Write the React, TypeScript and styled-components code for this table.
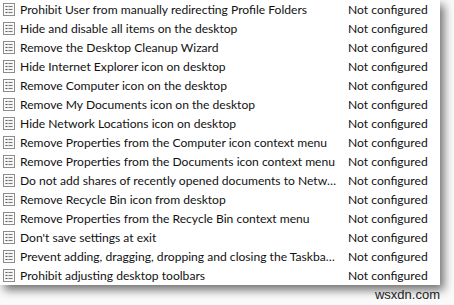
import styled, { createGlobalStyle } from "styled-components";

const GlobalStyle = createGlobalStyle`
  html, body {
    margin: 0;
    padding: 0;
    background: #fafafa;
  }
  body {
    width: 454px;
    height: 305px;
    overflow: hidden;
  }
`;

const Page = styled.div`
  width: 454px;
  height: 305px;
  display: flex;
  flex-direction: column;
  font-family: Lato, "Open Sans", sans-serif;
`;

const Panel = styled.div`
  width: 440px;
  height: 285px;
  background: #fff;
  box-shadow: 4px 5px 9px rgba(0, 0, 0, 0.55);
  display: flex;
  flex-direction: column;
`;

const Row = styled.div`
  height: 19px;
  display: flex;
  align-items: center;
  font-size: 12.1px;
  color: #111;
  white-space: nowrap;
`;

const NameCell = styled.div`
  width: 343px;
  flex: none;
  display: flex;
  align-items: center;
  gap: 5px;
  padding-left: 3px;
  box-sizing: border-box;
`;

const NameText = styled.span`
  flex: 1;
  min-width: 0;
  overflow: hidden;
  text-overflow: ellipsis;
  padding-right: 4px;
`;

const State = styled.span`
  padding-left: 5px;
`;

const Watermark = styled.div`
  align-self: flex-end;
  margin-right: 14px;
  margin-top: 2px;
  font-family: "Liberation Sans", Arial, sans-serif;
  font-size: 13px;
  color: #222;
`;

function PolicyIcon() {
  return (
    <svg width="12" height="13" viewBox="0 0 12 13" style={{ flex: "none" }}>
      <rect x="0.5" y="0.5" width="11" height="12" fill="#fdfdfd" stroke="#8c8c8c" />
      <rect x="2" y="2" width="8" height="9" fill="#f2f2f2" />
      <rect x="2.5" y="3" width="2" height="1" fill="#5a5a5a" />
      <rect x="2.5" y="6" width="2" height="1" fill="#5a5a5a" />
      <rect x="2.5" y="9" width="2" height="1" fill="#5a5a5a" />
      <rect x="5.5" y="3" width="4" height="1" fill="#7a7a7a" />
      <rect x="5.5" y="6" width="4" height="1" fill="#7a7a7a" />
      <rect x="5.5" y="9" width="4" height="1" fill="#7a7a7a" />
    </svg>
  );
}

const policies = [
  "Prohibit User from manually redirecting Profile Folders",
  "Hide and disable all items on the desktop",
  "Remove the Desktop Cleanup Wizard",
  "Hide Internet Explorer icon on desktop",
  "Remove Computer icon on the desktop",
  "Remove My Documents icon on the desktop",
  "Hide Network Locations icon on desktop",
  "Remove Properties from the Computer icon context menu",
  "Remove Properties from the Documents icon context menu",
  "Do not add shares of recently opened documents to Network Locations",
  "Remove Recycle Bin icon from desktop",
  "Remove Properties from the Recycle Bin context menu",
  "Don't save settings at exit",
  "Prevent adding, dragging, dropping and closing the Taskbar's toolbars",
  "Prohibit adjusting desktop toolbars",
];

export default function App() {
  return (
    <Page>
      <GlobalStyle />
      <Panel>
        {policies.map((p) => (
          <Row key={p}>
            <NameCell>
              <PolicyIcon />
              <NameText>{p}</NameText>
            </NameCell>
            <State>Not configured</State>
          </Row>
        ))}
      </Panel>
      <Watermark>wsxdn.com</Watermark>
    </Page>
  );
}
